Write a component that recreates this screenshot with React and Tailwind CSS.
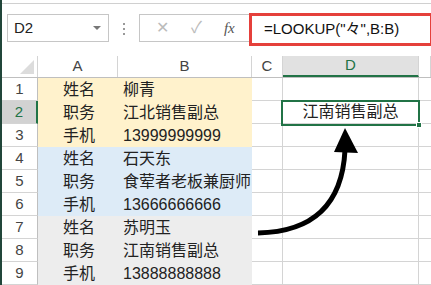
import React from 'react';

const cols = [
  { key: 'A', w: 'w-[80px]' },
  { key: 'B', w: 'w-[134px]' },
  { key: 'C', w: 'w-[31px]' },
  { key: 'D', w: 'w-[136px]' },
  { key: 'E', w: 'w-[12px]' },
];

const rows = [
  ['姓名', '柳青', 'bg-[#fff2cc]'],
  ['职务', '江北销售副总', 'bg-[#fff2cc]'],
  ['手机', '13999999999', 'bg-[#fff2cc]'],
  ['姓名', '石天东', 'bg-[#ddebf7]'],
  ['职务', '食荤者老板兼厨师', 'bg-[#ddebf7]'],
  ['手机', '13666666666', 'bg-[#ddebf7]'],
  ['姓名', '苏明玉', 'bg-[#ededed]'],
  ['职务', '江南销售副总', 'bg-[#ededed]'],
  ['手机', '13888888888', 'bg-[#ededed]'],
];

const App = () => {
  return (
    <div
      className="relative w-[431px] h-[285px] overflow-hidden bg-white border-l-2 border-[#21463a] text-[#222]"
      style={{ fontFamily: '"Liberation Sans", "Noto Sans CJK SC", sans-serif' }}
    >
      {/* Formula bar */}
      <div className="h-[53px] border-t border-[#d0d0d0] mt-[3px] relative">
        <div className="absolute left-[5px] top-[10px] w-[102px] h-[28px] border border-[#c6c6c6] flex items-center pl-[6px] text-[15px]">
          D2
          <span className="absolute right-[7px] top-[11px] w-0 h-0 border-l-[4px] border-r-[4px] border-t-[4px] border-l-transparent border-r-transparent border-t-[#777]" />
        </div>
        <div className="absolute left-[121px] top-[19px] flex flex-col gap-[3px]">
          <span className="w-[2px] h-[2px] bg-[#999]" />
          <span className="w-[2px] h-[2px] bg-[#999]" />
          <span className="w-[2px] h-[2px] bg-[#999]" />
        </div>
        <div className="absolute left-[137px] top-[10px] w-[120px] h-[28px] border border-[#c6c6c6] flex items-center text-[#bbb]">
          <span className="ml-[16px] text-[16px]">✕</span>
          <span className="ml-[22px] text-[16px]">✓</span>
          <span
            className="ml-[22px] text-[15px] italic text-[#555]"
            style={{ fontFamily: '"Liberation Serif", serif' }}
          >
            fx
          </span>
        </div>
        <div className="absolute left-[247px] top-[9px] w-[184px] h-[33px] border-[3px] border-[#e5403b] bg-white flex items-center pl-[12px] text-[15px] text-[#111]">
          =LOOKUP("々",B:B)
        </div>
      </div>

      {/* Grid */}
      <div className="relative">
        <div className="flex h-[22px] border-b border-[#bfbfbf] text-[15px] text-[#444]">
          <div className="w-[36px] border-r border-[#d4d4d4] relative">
            <svg className="absolute right-[3px] bottom-[3px]" width="14" height="14" viewBox="0 0 14 14">
              <path d="M14 0 L14 14 L0 14 Z" fill="#dcdcdc" />
            </svg>
          </div>
          {cols.map((c) => (
            <div
              key={c.key}
              className={`${c.w} flex items-center justify-center border-r border-[#d4d4d4] ${
                c.key === 'D' ? 'bg-[#e1e1e1] text-[#217346] border-b-2 border-b-[#217346]' : ''
              }`}
            >
              {c.key === 'E' ? '' : c.key}
            </div>
          ))}
        </div>

        {rows.map((r, i) => (
          <div key={i} className="flex h-[23px] text-[16px]">
            <div
              className={`w-[36px] flex items-center justify-center border-b border-[#d4d4d4] text-[15px] ${
                i === 1
                  ? 'bg-[#d2d2d2] text-[#217346] border-r-2 border-r-[#217346]'
                  : 'border-r border-r-[#bfbfbf] text-[#444]'
              }`}
            >
              {i + 1}
            </div>
            <div className={`w-[80px] ${r[2]} flex items-center pl-[25px]`}>{r[0]}</div>
            <div className={`w-[134px] ${r[2]} flex items-center pl-[5px] whitespace-nowrap overflow-hidden`}>
              {r[1]}
            </div>
            <div className="w-[31px] border-r border-b border-[#d4d4d4]" />
            <div className="w-[136px] border-r border-b border-[#d4d4d4] flex items-center justify-center">
              {i === 1 ? '江南销售副总' : ''}
            </div>
            <div className="w-[12px] border-b border-[#d4d4d4]" />
          </div>
        ))}

        {/* Selection */}
        <div className="absolute left-[279px] top-[44px] w-[139px] h-[26px] border-2 border-[#217346]">
          <span className="absolute -right-[4px] -bottom-[4px] w-[6px] h-[6px] bg-[#217346] border border-white" />
        </div>
      </div>

      {/* Arrow */}
      <svg className="absolute left-0 top-0" width="431" height="285" viewBox="0 0 431 285">
        <path d="M256 233 C 305 232, 340 210, 343 150" fill="none" stroke="#000" strokeWidth="5" />
        <path d="M332 152 L343 128 L356 153 Z" fill="#000" />
      </svg>
    </div>
  );
};

export default App;
